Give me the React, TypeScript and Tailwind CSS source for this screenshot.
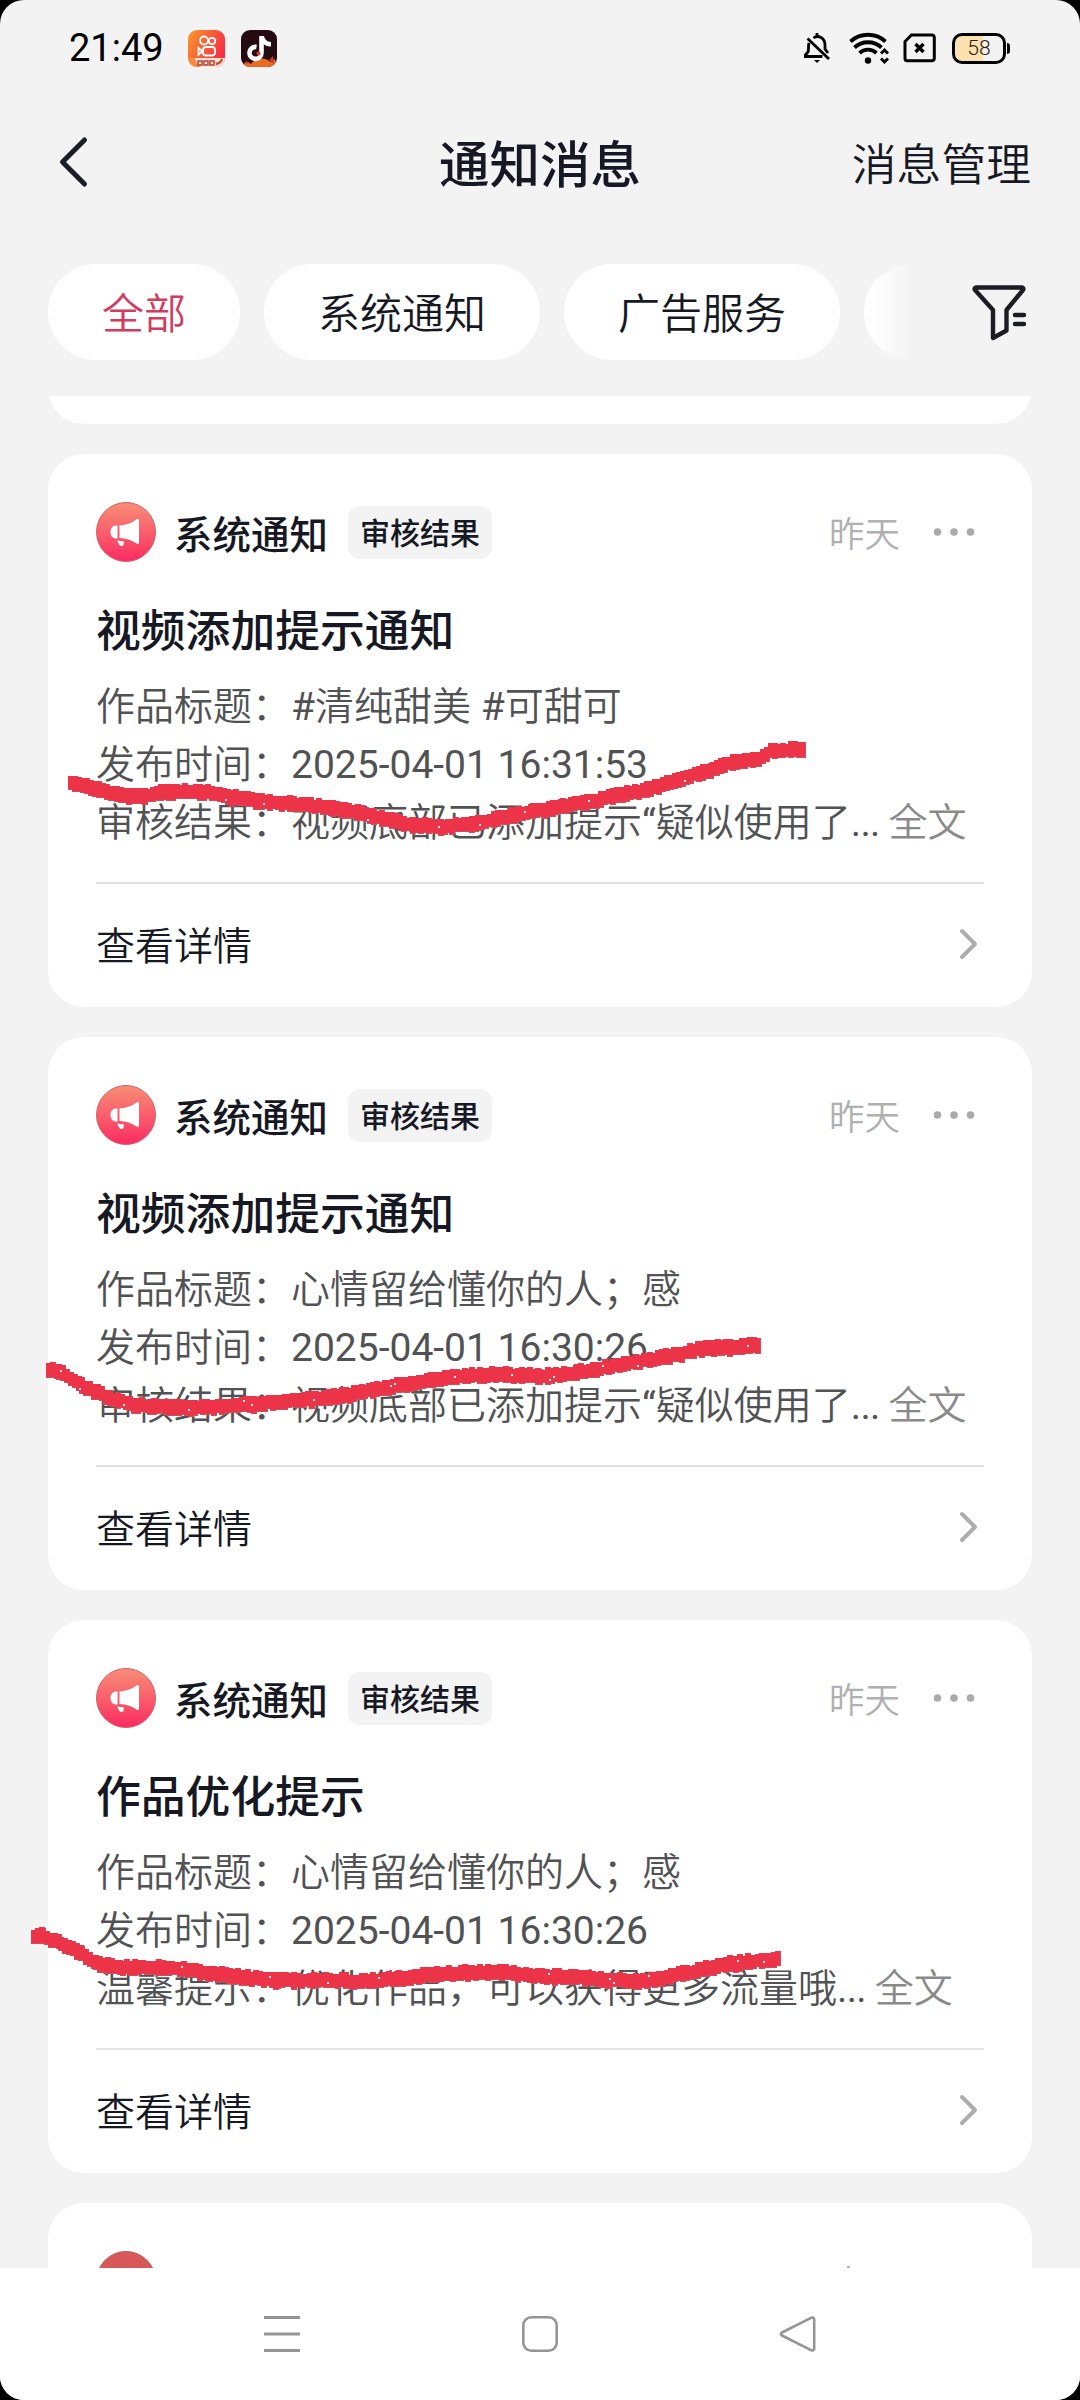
import { useMemo, type ReactNode } from "react";

type Point = [number, number];

type Notice = {
  id: string;
  title: string;
  work: string;
  publishedAt: string;
  resultLabel: string;
  result: string;
};

const TABS = ["全部", "系统通知", "广告服务"];

const NOTICES: Notice[] = [
  {
    id: "n1",
    title: "视频添加提示通知",
    work: "#清纯甜美 #可甜可",
    publishedAt: "2025-04-01 16:31:53",
    resultLabel: "审核结果",
    result: "视频底部已添加提示“疑似使用了",
  },
  {
    id: "n2",
    title: "视频添加提示通知",
    work: "心情留给懂你的人；感",
    publishedAt: "2025-04-01 16:30:26",
    resultLabel: "审核结果",
    result: "视频底部已添加提示“疑似使用了",
  },
  {
    id: "n3",
    title: "作品优化提示",
    work: "心情留给懂你的人；感",
    publishedAt: "2025-04-01 16:30:26",
    resultLabel: "温馨提示",
    result: "优化作品，可以获得更多流量哦",
  },
];

const STROKES: Point[][] = [
  [
    [68, 782], [92, 788], [110, 793], [128, 796], [142, 796], [158, 792], [185, 791], [205, 792],
    [225, 796], [255, 801], [300, 804], [330, 808], [355, 812], [385, 819], [410, 825], [445, 826],
    [475, 823], [500, 817], [530, 811], [560, 806], [590, 801], [620, 794], [652, 787], [680, 778],
    [710, 769], [730, 762], [756, 759], [768, 750], [802, 749],
  ],
  [
    [46, 1369], [56, 1371], [79, 1385], [103, 1396], [131, 1405], [172, 1407], [207, 1407], [258, 1403],
    [293, 1400], [327, 1397], [362, 1391], [396, 1385], [430, 1379], [465, 1375], [499, 1374],
    [537, 1376], [574, 1372], [609, 1366], [643, 1360], [671, 1355], [695, 1349], [719, 1347],
    [756, 1345],
  ],
  [
    [31, 1936], [40, 1935], [58, 1943], [79, 1953], [93, 1963], [120, 1967], [165, 1967], [207, 1973],
    [241, 1977], [275, 1980], [327, 1980], [362, 1981], [396, 1978], [430, 1974], [465, 1972],
    [499, 1972], [540, 1976], [574, 1977], [609, 1980], [636, 1981], [664, 1977], [695, 1970],
    [729, 1963], [747, 1961], [778, 1959],
  ],
];

// Cuts the line into narrow columns with uneven tops and bottoms, like a low-res marker
function markerPaths(points: Point[], seed: number) {
  let s = seed;
  const rand = () => {
    s = (s * 16807) % 2147483647;
    return s / 2147483647;
  };
  let body = "";
  let specks = "";
  let grit = "";
  for (let i = 0; i < points.length - 1; i++) {
    const [x1, y1] = points[i];
    const [x2, y2] = points[i + 1];
    for (let x = x1; x < x2; x += 4) {
      const y = Math.round(y1 + ((y2 - y1) * (x - x1)) / (x2 - x1));
      const top = y - 6 - Math.round(rand() * 2.4);
      const bottom = y + 6 + Math.round(rand() * 2.6);
      body += `M${x} ${top}h5V${bottom}h-5z`;
      const r = rand();
      if (r < 0.05) specks += `M${x} ${y + Math.round((rand() - 0.5) * 9)}h2v2h-2z`;
      else if (r < 0.12) grit += `M${x} ${y + Math.round((rand() - 0.5) * 8)}h2v2h-2z`;
    }
  }
  return { body, specks, grit };
}

function MarkerOverlay() {
  const strokes = useMemo(() => STROKES.map((p, i) => markerPaths(p, 71 + i * 977)), []);
  return (
    <svg
      className="pointer-events-none absolute inset-0"
      width="1080"
      height="2400"
      viewBox="0 0 1080 2400"
      shapeRendering="crispEdges"
    >
      {strokes.map((m, i) => (
        <g key={i}>
          <path d={m.body} fill="#e2384b" stroke="#cf4f5c" strokeWidth="1" />
          <path d={m.body} fill="#ec3348" />
          <path d={m.grit} fill="#bd4653" />
          <path d={m.specks} fill="#fbe9ea" />
        </g>
      ))}
    </svg>
  );
}

function StatusBar() {
  return (
    <div className="flex h-24 items-center pr-[70px] pl-[69px]">
      <div className="w-[119px] text-[38px] leading-none text-black">21:49</div>
      <svg width="37" height="37" viewBox="0 0 37 37">
        <defs>
          <linearGradient id="ks" x1="0" y1="0" x2="1" y2="0.5">
            <stop offset="0" stopColor="#fb9a2a" />
            <stop offset="0.5" stopColor="#fb6337" />
            <stop offset="1" stopColor="#f82f42" />
          </linearGradient>
          <clipPath id="ksClip">
            <rect width="37" height="37" rx="9" />
          </clipPath>
        </defs>
        <g clipPath="url(#ksClip)">
          <rect width="37" height="37" fill="url(#ks)" />
          <path d="M0 28h37v9H0z" fill="#fde3d2" />
          <path d="M0 28h7q1 6 6 9H0z" fill="#fb8a3c" />
          <path d="M10 31h4v4h-4zM16 31h4v4h-4zM22 31h4v4h-4z" fill="none" stroke="#b8423a" strokeWidth="1.5" />
          <path d="M28 34q5-1 6-5" fill="none" stroke="#d2432f" strokeWidth="2.4" />
        </g>
        <g fill="none" stroke="#fff" strokeWidth="1.8">
          <circle cx="16" cy="10.5" r="4" />
          <circle cx="24" cy="11" r="3.2" />
          <rect x="15" y="17" width="12" height="8.5" rx="3" />
          <path d="M10.500 18l4 3.200-4 3.500z" />
        </g>
      </svg>
      <svg className="ml-4" width="37" height="37" viewBox="0 0 37 37">
        <defs>
          <clipPath id="dyClip">
            <rect width="36" height="37" rx="9" />
          </clipPath>
        </defs>
        <g clipPath="url(#dyClip)">
          <rect width="37" height="37" fill="#240b11" />
          <path d="M2 37c1-6 5-6 8-3 4-7 16-7 19-2l5-3 2 8z" fill="#ea6b22" />
          <path d="M3 33l3-2 2 3zM28 30l4-4 1 8z" fill="#d8352f" />
        </g>
        <path d="M20.500 6v17a6 6 0 1 1-5-6" fill="none" stroke="#fff" strokeWidth="4.600" />
        <path d="M19 6h4c1 4 3 5.500 7 6v4.500c-4 0-7-1.500-9-4z" fill="#fff" />
        <path d="M15 23l3-2 2 3-3 2z" fill="#d8352f" />
      </svg>

      <div className="ml-auto flex items-center">
        <svg width="27" height="32" viewBox="0 0 27 32" fill="none" stroke="#000" strokeWidth="2.800">
          <path d="M13 1v3M9.500 6C14 2.500 21 6 21 13v4l3 4M5 11c-1 3 0 7-1 9l-2.600 3v1.500h17M3.500 6.500L25 27" />
          <path d="M10 28h6l-3 3z" fill="#000" stroke="none" />
        </svg>
        <svg className="ml-[18px]" width="41" height="33" viewBox="0 0 41 33" fill="none" stroke="#000" strokeWidth="3.800">
          <path d="M1.500 9.500a26 26 0 0 1 35 0M5.500 15.500a20 20 0 0 1 27 0M10.500 21a12.500 12.500 0 0 1 17 0" />
          <circle cx="19" cy="28.500" r="3.200" fill="#000" stroke="none" />
          <path d="M32 21.500l3.500-3.500 3.500 3.500M32 26.500l3.500 3.500 3.500-3.500" strokeWidth="3" />
        </svg>
        <svg className="ml-[13px]" width="33" height="30" viewBox="0 0 33 30" fill="none" stroke="#000">
          <path d="M8.500 2H29a2.300 2.300 0 0 1 2.300 2.300v21.200A2.300 2.300 0 0 1 29 27.800H4.200A2.300 2.300 0 0 1 2 25.500V8.500z" strokeWidth="3" />
          <path d="M12.500 11l8 8M20.500 11l-8 8" strokeWidth="3.400" />
        </svg>
        <div className="ml-4 flex items-center gap-px">
          <div className="flex h-[31px] w-[54px] items-center justify-center rounded-[10px] border-3 border-black bg-linear-to-r from-[#fbe2b0] from-58% to-transparent to-58% text-[21px] leading-none font-light text-[#2b1e14]">
            58
          </div>
          <div className="h-[11px] w-[3px] rounded-r-sm bg-black" />
        </div>
      </div>
    </div>
  );
}

function Header() {
  return (
    <div className="grid h-[136px] grid-cols-3 items-center pr-[49px] pl-[57px] text-[#161823]">
      <svg className="-mt-1" width="32" height="52" viewBox="0 0 32 52" fill="none" stroke="#1b1d26" strokeWidth="5" strokeLinecap="round" strokeLinejoin="round">
        <path d="M27.500 4L5.500 26l22 22" />
      </svg>
      <div className="-ml-[8px] pt-1 text-center font-[Roboto,'Noto_Sans_CJK_SC',sans-serif] text-[50.500px] leading-none font-medium whitespace-nowrap">
        通知消息
      </div>
      <div className="pt-1 text-right text-[44.800px] leading-none">消息管理</div>
    </div>
  );
}

function Tabs() {
  return (
    <div className="flex h-[164px] items-start pt-8 pl-12">
      <div className="relative flex w-[868px] gap-6 overflow-hidden">
        {TABS.map((tab, i) => (
          <div
            key={tab}
            className={
              i === 0
                ? "flex h-24 shrink-0 items-center rounded-full bg-white px-[54px] pt-1 text-[42px] text-[#d23c5f]"
                : "flex h-24 shrink-0 items-center rounded-full bg-white px-[54px] pt-1 text-[42px] text-[#161823]"
            }
          >
            {tab}
          </div>
        ))}
        <div className="h-24 w-[276px] shrink-0 rounded-full bg-white" />
        <div className="absolute inset-y-0 right-0 w-12 bg-linear-to-r from-[#f3f3f3]/0 to-[#f3f3f3]" />
      </div>
      <svg className="mt-[19px] ml-[54px]" width="60" height="60" viewBox="0 0 60 60" fill="none" stroke="#1b1d22" strokeWidth="4.400" strokeLinecap="round" strokeLinejoin="round">
        <path d="M6 4.500h46a1.500 1.500 0 0 1 1 2.500L36.500 27v20.500L23 55V27L5 7a1.500 1.500 0 0 1 1-2.500z" />
        <path d="M45 32h9M45 41h9" />
      </svg>
    </div>
  );
}

function HornIcon({ muted }: { muted?: boolean }) {
  return (
    <svg width="60" height="60" viewBox="0 0 60 60">
      <defs>
        <linearGradient id="horn" x1="0" y1="0" x2="0" y2="1">
          <stop offset="0" stopColor="#f78e76" />
          <stop offset="0.5" stopColor="#fa5f6c" />
          <stop offset="1" stopColor="#fb2a62" />
        </linearGradient>
      </defs>
      <circle
        cx="30"
        cy="30"
        r="29.500"
        fill={muted ? "#d9595a" : "url(#horn)"}
        stroke={muted ? "#b9595c" : "#d2606a"}
        strokeWidth="1"
      />
      {muted ? null : (
        <>
          <path d="M21.500 23.500v13h-2c-3 0-5-3-5-6.500s2-6.500 5-6.500zM23.500 23.500c7-.3 13-3 17-6 1.300-.9 2.500-.4 2.500 1v22c0 1.400-1.200 1.900-2.500 1-4-3-10-5.200-17-5.500z" fill="#fff" />
          <path d="M21 38.500l7 1-.5 3c-.5 2-3.500 2-4.300 0z" fill="#fff" />
        </>
      )}
    </svg>
  );
}

function NoticeHeader() {
  return (
    <div className="flex h-[60px] items-center">
      <HornIcon />
      <div className="flex items-center font-[Roboto,'Noto_Sans_CJK_SC',sans-serif] leading-none font-medium text-[#161823]">
        <div className="ml-[18px] pt-2 text-[38.500px]">系统通知</div>
        <div className="ml-5 flex h-[53px] items-center rounded-xl bg-[#f3f3f4] px-3 pt-1 text-[30px]">审核结果</div>
      </div>
      <div className="ml-auto pt-2 text-[35.500px] leading-none text-[#b0b0b0]">昨天</div>
      <svg className="mr-2 ml-[32px]" width="44" height="10" viewBox="0 0 44 10" fill="#aaa">
        <circle cx="5.500" cy="5" r="3.800" />
        <circle cx="22" cy="5" r="3.800" />
        <circle cx="38.500" cy="5" r="3.800" />
      </svg>
    </div>
  );
}

function Line({ label, children }: { label: string; children: ReactNode }) {
  return (
    <div className="h-[58px] whitespace-nowrap">
      {label}：{children}
    </div>
  );
}

function NoticeCard({ notice }: { notice: Notice }) {
  return (
    <div className="h-[553px] shrink-0 rounded-[36px] bg-white px-12 pt-12">
      <NoticeHeader />
      <div className="mt-10 h-[60px] font-[Roboto,'Noto_Sans_CJK_SC',sans-serif] text-[44.800px] leading-[60px] font-medium text-[#161823]">
        {notice.title}
      </div>
      <div className="mt-4 h-[175px] text-[39px] leading-[58px] text-[#515254]">
        <Line label="作品标题">{notice.work}</Line>
        <Line label="发布时间">{notice.publishedAt}</Line>
        <Line label={notice.resultLabel}>
          {notice.result}
          <span className="tracking-[-0.700px]">... </span>
          <span className="text-[#8a8a8a]">全文</span>
        </Line>
      </div>
      <div className="mt-[29px] h-[2px] bg-[#e2e2e2]" />
      <div className="flex h-[122px] items-center justify-between text-[39px] leading-none text-[#161823]">
        <div className="pt-1">查看详情</div>
        <svg className="-mt-0.5 mr-1" width="22" height="34" viewBox="0 0 22 34" fill="none" stroke="#adadad" strokeWidth="4" strokeLinecap="round" strokeLinejoin="round">
          <path d="M4 4l13 13L4 30" />
        </svg>
      </div>
    </div>
  );
}

function NavBar() {
  return (
    <div className="flex h-[132px] items-start justify-between bg-white px-[263px] pt-[47px]">
      <svg width="38" height="38" viewBox="0 0 38 38" stroke="#959595" strokeWidth="3">
        <path d="M1 2.500h36M1 19h36M1 35.500h36" />
      </svg>
      <svg width="38" height="38" viewBox="0 0 38 38" fill="none" stroke="#959595" strokeWidth="2.600">
        <rect x="2.300" y="2.300" width="33.400" height="33.400" rx="8" />
      </svg>
      <svg width="38" height="38" viewBox="0 0 38 38" fill="none" stroke="#959595" strokeWidth="2.600" strokeLinejoin="round">
        <path d="M3 17.500L32 2.800c1.600-.8 3.200 0 3.200 1.800v28.800c0 1.800-1.600 2.600-3.200 1.800L3 20.500c-1.400-.8-1.400-2.200 0-3z" />
      </svg>
    </div>
  );
}

export default function App() {
  return (
    <div className="h-[2400px] w-[1080px] bg-black">
      <div className="relative flex h-full flex-col overflow-hidden rounded-[24px] bg-[#f3f3f3] font-[Roboto,'Noto_Sans_CJK_SC_DemiLight','Noto_Sans_CJK_SC',sans-serif]">
        <StatusBar />
        <Header />
        <Tabs />
        <div className="flex h-[1872px] flex-col gap-[30px] overflow-hidden px-12">
          <div className="h-7 shrink-0 overflow-hidden">
            <div className="-mt-[72px] h-[100px] rounded-[36px] bg-white" />
          </div>
          {NOTICES.map((n) => (
            <NoticeCard key={n.id} notice={n} />
          ))}
          <div className="flex h-[553px] shrink-0 justify-between rounded-[36px] bg-white px-12 pt-12">
            <HornIcon muted />
            <div className="mt-[15px] mr-[134px] h-[2px] w-[3px] bg-[#b5b5b5]" />
          </div>
        </div>
        <NavBar />
        <MarkerOverlay />
      </div>
    </div>
  );
}
